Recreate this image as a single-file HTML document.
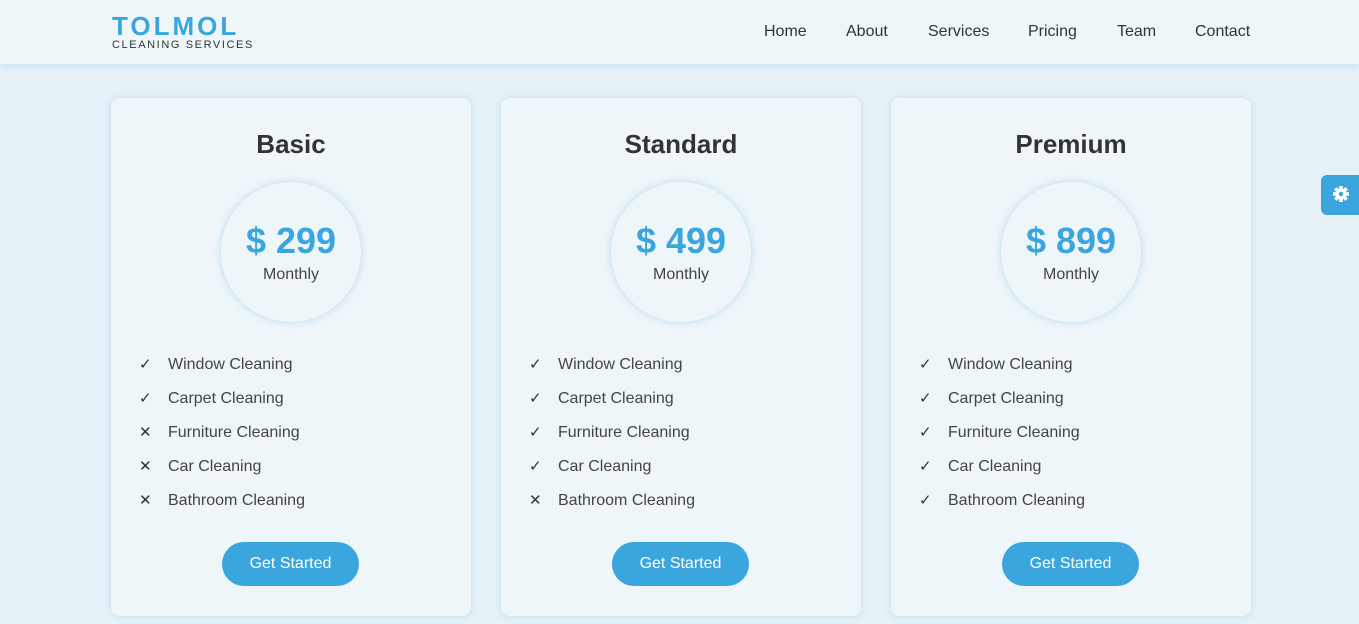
<!DOCTYPE html><html><head><style>
*{margin:0;padding:0;box-sizing:border-box}
body{width:1359px;height:624px;overflow:hidden;background:#e6f1f8;font-family:"Liberation Sans",sans-serif;position:relative}
.hdr{position:absolute;left:0;top:0;width:1359px;height:64px;background:#eef6fa;box-shadow:0 2px 6px rgba(150,200,230,.4)}
.logo{position:absolute;left:112px;top:13px;color:#3ba5dd;font-weight:bold;font-size:26px;letter-spacing:3px;line-height:26px}
.sub{position:absolute;left:112px;top:39px;font-size:11px;letter-spacing:1.6px;color:#333}
.nav{position:absolute;top:23px;font-size:16px;color:#333}
.card{position:absolute;top:98px;width:360px;height:518px;background:#eef6fa;border-radius:8px;box-shadow:0 0 6px rgba(150,200,230,.5)}
.t{position:absolute;width:100%;text-align:center;font-size:26px;font-weight:bold;color:#333;top:31px}
.c{position:absolute;left:110px;top:84px;width:140px;height:140px;border-radius:50%;background:#eef6fa;box-shadow:0 0 8px rgba(150,200,230,.6)}
.p{position:absolute;top:38px;width:100%;text-align:center;font-size:36px;font-weight:bold;color:#3ba5dd}
.m{position:absolute;top:84px;width:100%;text-align:center;font-size:16px;color:#444}
.f{position:absolute;left:28px;font-size:16px;color:#444}
.f span{display:inline-block;width:29px;font-size:15px;color:#333}
.b{position:absolute;left:111px;top:444px;width:137px;height:44px;border-radius:22px;background:#3ba5dd;color:#fff;font-size:16px;text-align:center;line-height:44px}
.g{position:absolute;left:1321px;top:175px;width:40px;height:40px;background:#3ba5dd;border-radius:6px 0 0 6px}
</style></head><body>
<div class="hdr"></div>
<div class="logo">TOLMOL</div><div class="sub">CLEANING SERVICES</div>
<div class="nav" style="left:764px">Home</div><div class="nav" style="left:846px">About</div><div class="nav" style="left:928px">Services</div><div class="nav" style="left:1028px">Pricing</div><div class="nav" style="left:1117px">Team</div><div class="nav" style="left:1195px">Contact</div>
<div class="g"><svg width="40" height="40" viewBox="0 0 40 40"><g transform="translate(20,19)" fill="#fff"><circle r="5.5"/><g><rect x="-1.8" y="-8" width="3.6" height="16"/><rect x="-1.8" y="-8" width="3.6" height="16" transform="rotate(45)"/><rect x="-1.8" y="-8" width="3.6" height="16" transform="rotate(90)"/><rect x="-1.8" y="-8" width="3.6" height="16" transform="rotate(135)"/></g><circle r="2.2" fill="#3ba5dd"/></g></svg></div>
<div class="card" style="left:111px"><div class="t">Basic</div><div class="c"><div class="p">$ 299</div><div class="m">Monthly</div></div>
<div class="f" style="top:257px"><span>✓</span>Window Cleaning</div><div class="f" style="top:291px"><span>✓</span>Carpet Cleaning</div><div class="f" style="top:325px"><span>✕</span>Furniture Cleaning</div><div class="f" style="top:359px"><span>✕</span>Car Cleaning</div><div class="f" style="top:393px"><span>✕</span>Bathroom Cleaning</div><div class="b">Get Started</div></div>
<div class="card" style="left:501px"><div class="t">Standard</div><div class="c"><div class="p">$ 499</div><div class="m">Monthly</div></div>
<div class="f" style="top:257px"><span>✓</span>Window Cleaning</div><div class="f" style="top:291px"><span>✓</span>Carpet Cleaning</div><div class="f" style="top:325px"><span>✓</span>Furniture Cleaning</div><div class="f" style="top:359px"><span>✓</span>Car Cleaning</div><div class="f" style="top:393px"><span>✕</span>Bathroom Cleaning</div><div class="b">Get Started</div></div>
<div class="card" style="left:891px"><div class="t">Premium</div><div class="c"><div class="p">$ 899</div><div class="m">Monthly</div></div>
<div class="f" style="top:257px"><span>✓</span>Window Cleaning</div><div class="f" style="top:291px"><span>✓</span>Carpet Cleaning</div><div class="f" style="top:325px"><span>✓</span>Furniture Cleaning</div><div class="f" style="top:359px"><span>✓</span>Car Cleaning</div><div class="f" style="top:393px"><span>✓</span>Bathroom Cleaning</div><div class="b">Get Started</div></div>
</body></html>
